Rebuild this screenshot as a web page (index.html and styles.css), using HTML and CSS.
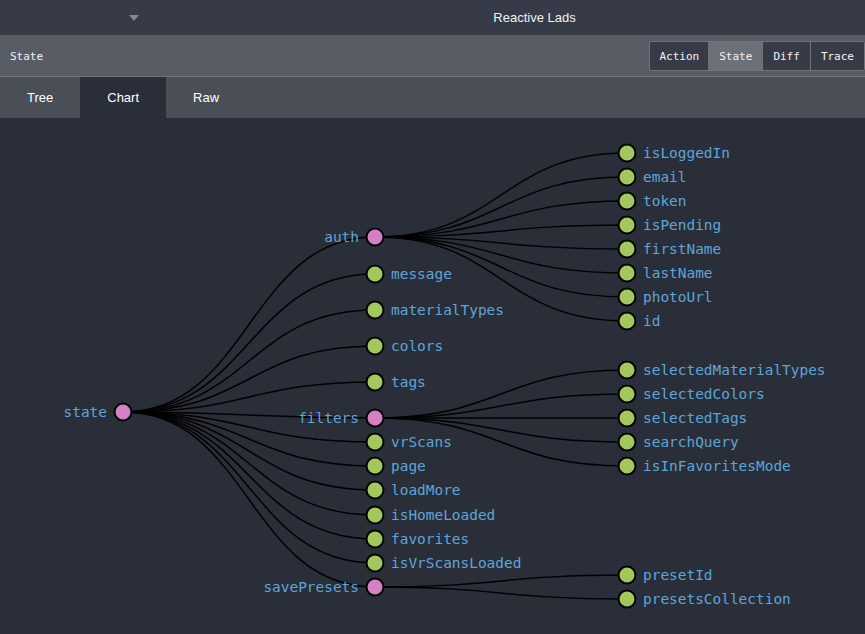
FILE: index.html
```html
<!DOCTYPE html>
<html>
<head>
<meta charset="utf-8">
<title>Reactive Lads</title>
<link rel="stylesheet" href="styles.css">
</head>
<body>
<div class="app">
  <header class="topbar">
    <div class="instance"><span class="caret"></span></div>
    <div class="title">Reactive Lads</div>
  </header>
  <div class="monitor-bar">
    <div class="monitor-title">State</div>
    <div class="btn-group">
      <button class="btn">Action</button>
      <button class="btn active">State</button>
      <button class="btn">Diff</button>
      <button class="btn">Trace</button>
    </div>
  </div>
  <nav class="tabs">
    <div class="tab">Tree</div>
    <div class="tab selected">Chart</div>
    <div class="tab">Raw</div>
  </nav>
  <main class="chart">
    <svg class="tree" width="865" height="516" viewBox="0 118 865 516" xmlns="http://www.w3.org/2000/svg">
      <g class="links">
        <path d="M123,412 C249,412 249,237 375,237"/>
        <path d="M123,412 C249,412 249,274 375,274"/>
        <path d="M123,412 C249,412 249,310 375,310"/>
        <path d="M123,412 C249,412 249,346 375,346"/>
        <path d="M123,412 C249,412 249,382 375,382"/>
        <path d="M123,412 C249,412 249,418 375,418"/>
        <path d="M123,412 C249,412 249,442 375,442"/>
        <path d="M123,412 C249,412 249,466 375,466"/>
        <path d="M123,412 C249,412 249,490 375,490"/>
        <path d="M123,412 C249,412 249,515 375,515"/>
        <path d="M123,412 C249,412 249,539 375,539"/>
        <path d="M123,412 C249,412 249,563 375,563"/>
        <path d="M123,412 C249,412 249,587 375,587"/>
        <path d="M375,237 C501,237 501,153 627,153"/>
        <path d="M375,237 C501,237 501,177 627,177"/>
        <path d="M375,237 C501,237 501,201 627,201"/>
        <path d="M375,237 C501,237 501,225 627,225"/>
        <path d="M375,237 C501,237 501,249 627,249"/>
        <path d="M375,237 C501,237 501,273 627,273"/>
        <path d="M375,237 C501,237 501,297 627,297"/>
        <path d="M375,237 C501,237 501,321 627,321"/>
        <path d="M375,418 C501,418 501,370 627,370"/>
        <path d="M375,418 C501,418 501,394 627,394"/>
        <path d="M375,418 C501,418 501,418 627,418"/>
        <path d="M375,418 C501,418 501,442 627,442"/>
        <path d="M375,418 C501,418 501,466 627,466"/>
        <path d="M375,587 C501,587 501,575 627,575"/>
        <path d="M375,587 C501,587 501,599 627,599"/>
      </g>
      <g class="nodes">
        <circle class="parent" cx="123" cy="412" r="8.5"/>
        <circle class="parent" cx="375" cy="237" r="8.5"/>
        <circle class="leaf" cx="375" cy="274" r="8.5"/>
        <circle class="leaf" cx="375" cy="310" r="8.5"/>
        <circle class="leaf" cx="375" cy="346" r="8.5"/>
        <circle class="leaf" cx="375" cy="382" r="8.5"/>
        <circle class="parent" cx="375" cy="418" r="8.5"/>
        <circle class="leaf" cx="375" cy="442" r="8.5"/>
        <circle class="leaf" cx="375" cy="466" r="8.5"/>
        <circle class="leaf" cx="375" cy="490" r="8.5"/>
        <circle class="leaf" cx="375" cy="515" r="8.5"/>
        <circle class="leaf" cx="375" cy="539" r="8.5"/>
        <circle class="leaf" cx="375" cy="563" r="8.5"/>
        <circle class="parent" cx="375" cy="587" r="8.5"/>
        <circle class="leaf" cx="627" cy="153" r="8.5"/>
        <circle class="leaf" cx="627" cy="177" r="8.5"/>
        <circle class="leaf" cx="627" cy="201" r="8.5"/>
        <circle class="leaf" cx="627" cy="225" r="8.5"/>
        <circle class="leaf" cx="627" cy="249" r="8.5"/>
        <circle class="leaf" cx="627" cy="273" r="8.5"/>
        <circle class="leaf" cx="627" cy="297" r="8.5"/>
        <circle class="leaf" cx="627" cy="321" r="8.5"/>
        <circle class="leaf" cx="627" cy="370" r="8.5"/>
        <circle class="leaf" cx="627" cy="394" r="8.5"/>
        <circle class="leaf" cx="627" cy="418" r="8.5"/>
        <circle class="leaf" cx="627" cy="442" r="8.5"/>
        <circle class="leaf" cx="627" cy="466" r="8.5"/>
        <circle class="leaf" cx="627" cy="575" r="8.5"/>
        <circle class="leaf" cx="627" cy="599" r="8.5"/>
      </g>
      <g class="labels">
        <text class="end" x="107" y="417">state</text>
        <text class="end" x="359" y="242">auth</text>
        <text x="391" y="279">message</text>
        <text x="391" y="315">materialTypes</text>
        <text x="391" y="351">colors</text>
        <text x="391" y="387">tags</text>
        <text class="end" x="359" y="423">filters</text>
        <text x="391" y="447">vrScans</text>
        <text x="391" y="471">page</text>
        <text x="391" y="495">loadMore</text>
        <text x="391" y="520">isHomeLoaded</text>
        <text x="391" y="544">favorites</text>
        <text x="391" y="568">isVrScansLoaded</text>
        <text class="end" x="359" y="592">savePresets</text>
        <text x="643" y="158">isLoggedIn</text>
        <text x="643" y="182">email</text>
        <text x="643" y="206">token</text>
        <text x="643" y="230">isPending</text>
        <text x="643" y="254">firstName</text>
        <text x="643" y="278">lastName</text>
        <text x="643" y="302">photoUrl</text>
        <text x="643" y="326">id</text>
        <text x="643" y="375">selectedMaterialTypes</text>
        <text x="643" y="399">selectedColors</text>
        <text x="643" y="423">selectedTags</text>
        <text x="643" y="447">searchQuery</text>
        <text x="643" y="471">isInFavoritesMode</text>
        <text x="643" y="580">presetId</text>
        <text x="643" y="604">presetsCollection</text>
      </g>
    </svg>
  </main>
</div>
</body>
</html>
```

FILE: styles.css
```css
* { box-sizing: border-box; }
html, body {
  margin: 0;
  padding: 0;
  background: #2a2e38;
  width: 865px;
  height: 634px;
  overflow: hidden;
}
.app {
  display: flex;
  flex-direction: column;
  width: 865px;
  height: 634px;
}
.topbar {
  display: flex;
  align-items: center;
  height: 35px;
  background: #363b47;
  font-family: "Liberation Sans", Arial, sans-serif;
  font-size: 13px;
  color: #f2f2f2;
}
.instance {
  width: 204px;
  height: 100%;
  display: flex;
  align-items: center;
  padding-left: 129px;
}
.caret {
  width: 0;
  height: 0;
  border-left: 5.5px solid transparent;
  border-right: 5.5px solid transparent;
  border-top: 6px solid #858892;
  margin-top: 1px;
}
.title {
  flex: 1;
  text-align: center;
}
.monitor-bar {
  display: flex;
  align-items: center;
  justify-content: space-between;
  height: 42px;
  background: #585c64;
  border-bottom: 1px solid #6f737a;
  padding: 1px 0 0 10px;
}
.monitor-title {
  font-family: "DejaVu Sans Mono", monospace;
  font-size: 11px;
  color: #f4f4f4;
}
.btn-group {
  display: flex;
  height: 30px;
  border: 1px solid #6f737a;
  border-radius: 3px;
  overflow: hidden;
}
.btn {
  font-family: "DejaVu Sans Mono", monospace;
  font-size: 11px;
  color: #f4f4f4;
  background: #363b47;
  border: none;
  border-left: 1px solid #6f737a;
  padding: 0 10px;
  margin: 0;
  height: 100%;
}
.btn:first-child { border-left: none; padding: 0 9px 0 10px; }
.btn.active { background: #6c7078; }
.tabs {
  display: flex;
  height: 41px;
  background: #4a4e57;
  font-family: "Liberation Sans", Arial, sans-serif;
  font-size: 13px;
  color: #ffffff;
}
.tab {
  display: flex;
  align-items: center;
  padding: 0 27px;
}
.tab.selected {
  background: #2a2e38;
}
.chart {
  flex: 1;
  background: #2a2e38;
}
.tree { display: block; }
.links path {
  fill: none;
  stroke: #000;
  stroke-width: 1.5;
}
.nodes circle {
  stroke: #000;
  stroke-width: 2;
}
.nodes .parent { fill: #d580c4; }
.nodes .leaf { fill: #a2c75a; }
.labels text {
  font-family: "DejaVu Sans Mono", monospace;
  font-size: 14.45px;
  fill: #5ca6da;
}
.labels .end { text-anchor: end; }
```
